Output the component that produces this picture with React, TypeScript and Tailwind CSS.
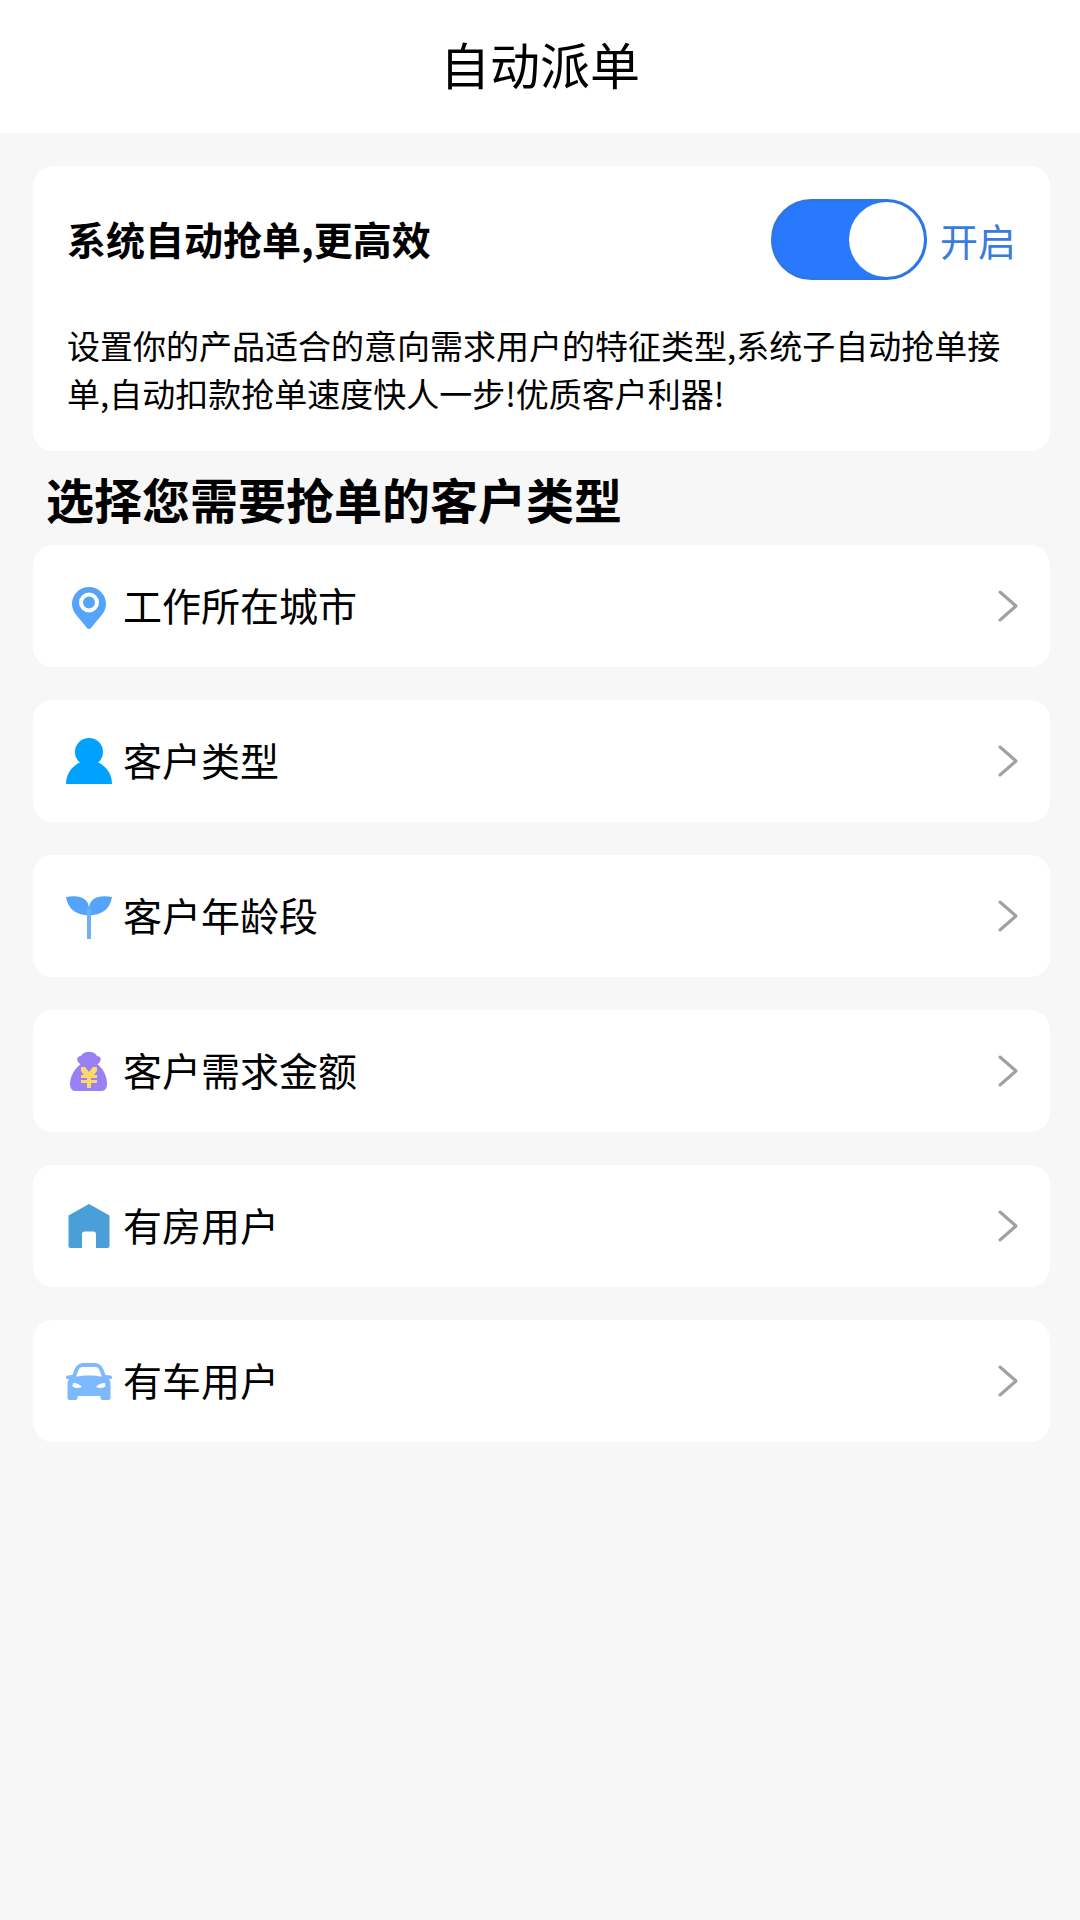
import type { ReactNode } from 'react';

const PinIcon = () => (
  <svg viewBox="0 0 46 46" className="h-[46px] w-[46px]">
    <path d="M23 4C13.500 4 6 11.500 6 21c0 5 2.200 8.800 5.500 12.500L21 45c1 1.200 3 1.200 4 0l9.500-11.500C37.800 29.800 40 26 40 21 40 11.500 32.500 4 23 4z" fill="#55a4fa" />
    <circle cx="23" cy="19.500" r="8" fill="none" stroke="#fff" strokeWidth="4" />
  </svg>
);

const PersonIcon = () => (
  <svg viewBox="0 0 46 46" className="h-[46px] w-[46px]">
    <circle cx="23" cy="14" r="14" fill="#00a1ff" />
    <path d="M0 46c0-11 7-19 15-22h16c8 3 15 11 15 22z" fill="#00a1ff" />
  </svg>
);

const SproutIcon = () => (
  <svg viewBox="0 0 46 46" className="h-[46px] w-[46px]">
    <path d="M0 4c9-1.500 16-.5 20 3.500 3 3 3.500 8 3 15C11 22 2 17 0 4z" fill="#55a4fa" />
    <path d="M46 4c-9-1.500-16-.5-20 3.500-3 3-3.500 8-3 15 12-.5 21-5.500 23-18.500z" fill="#55a4fa" />
    <rect x="21" y="16" width="4" height="30" fill="#6db0f5" />
  </svg>
);

const BagIcon = () => (
  <svg viewBox="0 0 46 46" className="h-[46px] w-[46px]">
    <path d="M15 8c2-4 6-4 8-4s6 0 8 4c4 0 5 4 2 7l-3 3H16l-3-3c-3-3-2-7 2-7z" fill="#9a80f5" />
    <path d="M15 16h16c6 4 10 12 10 20 0 4-2 7-5 7H9c-3 0-5-3-5-7 0-8 5-16 11-20z" fill="#9a80f5" />
    <path d="M15 19h4l4 5 4-5h4v4l-3 4h3v3h-6v2h6v3h-6v5h-4v-5h-6v-3h6v-2h-6v-3h3l-3-4z" fill="#fcd968" />
  </svg>
);

const HouseIcon = () => (
  <svg viewBox="0 0 46 46" className="h-[46px] w-[46px]">
    <path d="M23 1L2.500 12.500V43c0 1.200.8 2 2 2H16V31c0-1.500 1-2.500 2.500-2.500h9c1.500 0 2.500 1 2.500 2.500v14h11.500c1.200 0 2-.8 2-2V12.500z" fill="#4a9fd8" />
  </svg>
);

const CarIcon = () => (
  <svg viewBox="0 0 46 46" className="h-[46px] w-[46px]">
    <path d="M8 13c1.500-5 5-8 9-8h12c4 0 7.500 3 9 8l1.500 4 5 .5c1 .2 1.500 1 1.500 2 0 1-.7 1.500-1.500 1.500H43c1 1.500 1.500 3 1.500 5v14c0 1.200-.8 2-2 2h-6c-1.200 0-2-.8-2-2v-2H11.500v2c0 1.200-.8 2-2 2h-6c-1.200 0-2-.8-2-2V26c0-2 .5-3.500 1.500-5H1.500C.7 21 0 20.500 0 19.500c0-1 .5-1.800 1.500-2l5-.5z" fill="#7cb9ff" />
    <path d="M13 11c1-1.500 2.500-2 4-2h12c1.500 0 3 .5 4 2l3 7.500c-8-1.500-18-1.500-26 0z" fill="#fff" />
    <path d="M7 25c3.500 0 7 1.500 9 4-4 1.500-7.500 1-9.500-.5zM39 25c-3.500 0-7 1.500-9 4 4 1.500 7.500 1 9.500-.5z" fill="#fff" />
  </svg>
);

const rows: { icon: ReactNode; label: string }[] = [
  { icon: <PinIcon />, label: '工作所在城市' },
  { icon: <PersonIcon />, label: '客户类型' },
  { icon: <SproutIcon />, label: '客户年龄段' },
  { icon: <BagIcon />, label: '客户需求金额' },
  { icon: <HouseIcon />, label: '有房用户' },
  { icon: <CarIcon />, label: '有车用户' },
];

export default function App() {
  return (
    <div className="min-h-[1920px] bg-[#f7f7f7] font-['Noto_Sans_CJK_SC','Noto_Sans',sans-serif] text-black">
      <header className="flex h-[133px] items-center justify-center bg-white pb-[7px] text-[50px]">自动派单</header>

      <main className="pt-[33px] pr-[30px] pl-[33px]">
        <section className="h-[285px] rounded-[20px] bg-white pr-[34px] pl-[34px]">
          <div className="flex items-center justify-between pt-[33px]">
            <h2 className="pb-[3px] text-[39px] font-bold">系统自动抢单,更高效</h2>
            <div className="flex items-center gap-[13px]">
              <div className="flex h-[81px] w-[156px] items-center justify-end rounded-full border-[3px] border-[#2d76e4] bg-[#2979ff]">
                <div className="h-[75px] w-[75px] rounded-full bg-white" />
              </div>
              <span className="text-[38px] text-[#3a7cdb]">开启</span>
            </div>
          </div>
          <p className="mt-[41px] text-[33px] leading-[48px]">
            设置你的产品适合的意向需求用户的特征类型,系统子自动抢单接单,自动扣款抢单速度快人一步!优质客户利器!
          </p>
        </section>

        <h1 className="mt-[12px] pl-[13px] text-[48px] leading-[70px] font-bold">选择您需要抢单的客户类型</h1>

        <ul className="mt-[12px] flex flex-col gap-[33px]">
          {rows.map((row) => (
            <li key={row.label} className="flex h-[122px] items-center rounded-[20px] bg-white pr-[32px] pl-[33px]">
              {row.icon}
              <span className="ml-[11px] flex-1 pb-[3px] text-[39px]">{row.label}</span>
              <svg viewBox="0 0 20 32" className="h-[32px] w-[20px]" fill="none" stroke="#a0a0a0" strokeWidth="3" strokeLinecap="round" strokeLinejoin="round">
                <path d="M2 2l16 14L2 30" />
              </svg>
            </li>
          ))}
        </ul>
      </main>
    </div>
  );
}
